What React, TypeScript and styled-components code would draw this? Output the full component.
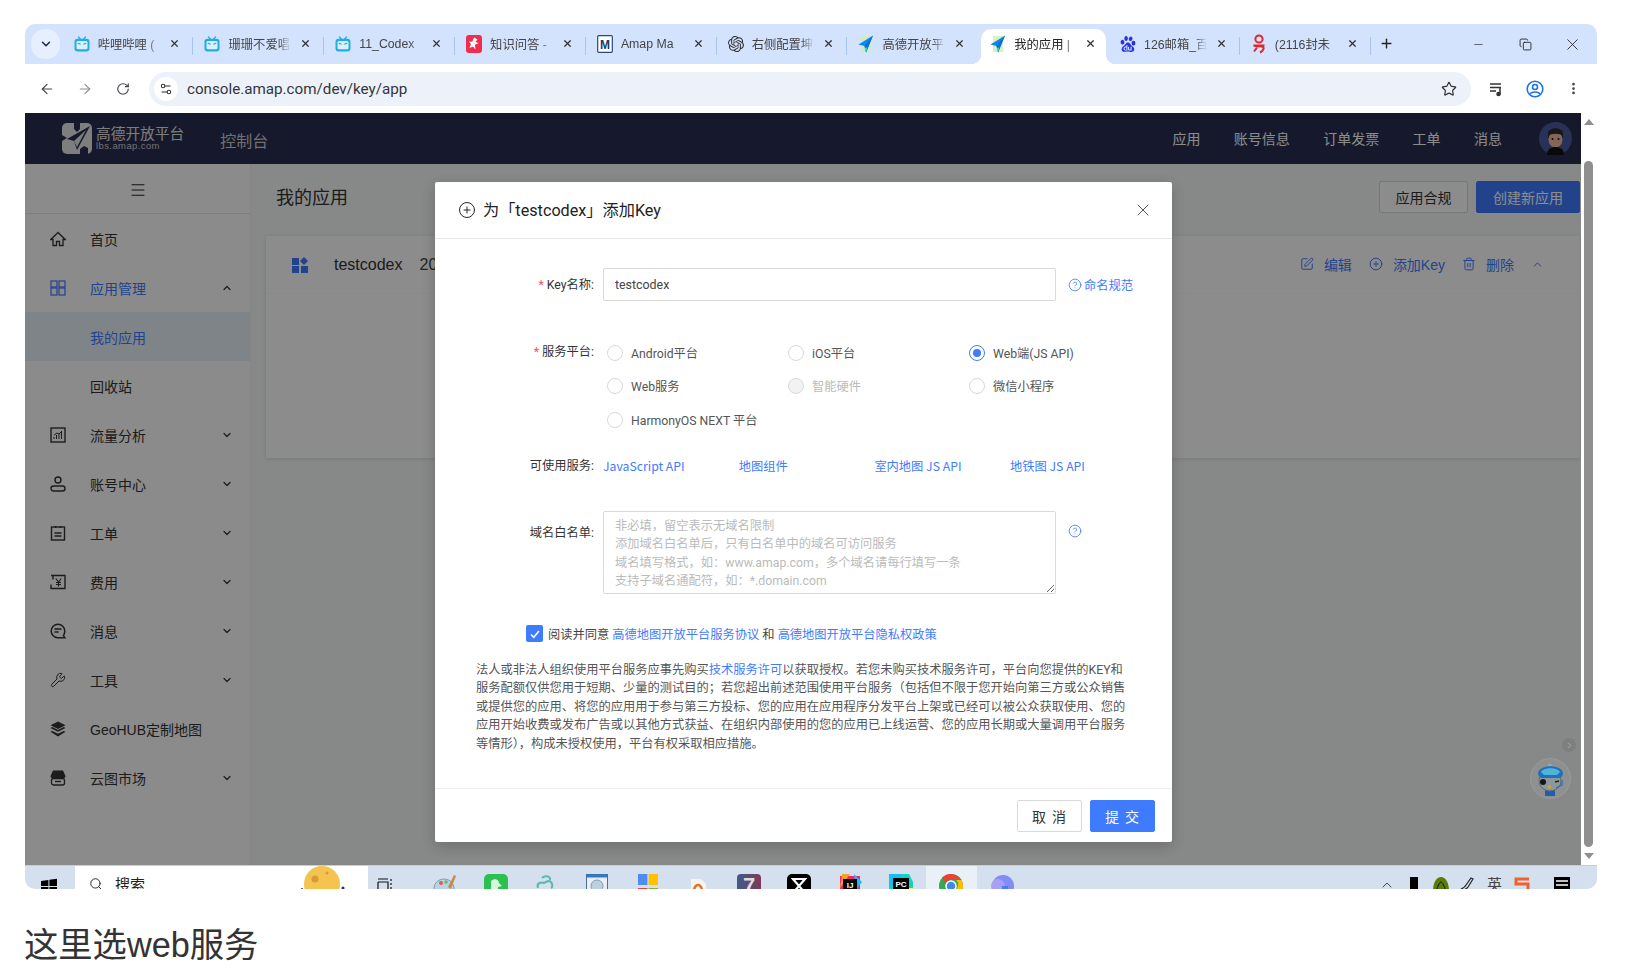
import React from 'react';
import styled, { createGlobalStyle } from 'styled-components';
import {
  ArrowLeft,
  ArrowRight,
  ChevronDown,
  ChevronUp,
  CircleHelp,
  CirclePlus,
  Copy,
  EllipsisVertical,
  Menu,
  Minus,
  Plus,
  RotateCw,
  Search,
  Settings2,
  SquarePen,
  Star,
  Trash2,
  Wrench,
  X,
} from 'lucide-react';
import { SiBaidu, SiOpenai } from 'react-icons/si';

const BLUE = '#3f7bff';
const CJK = `"Liberation Sans", "Noto Sans CJK SC", sans-serif`;
const FORM = `Roboto, "Noto Sans CJK SC", sans-serif`;

const GlobalStyle = createGlobalStyle`
  html, body {
    margin: 0;
    padding: 0;
    background: #fff;
    font-family: ${CJK};
    color: #333;
  }
  * { box-sizing: border-box; }
`;

const Screen = styled.div`
  width: 1634px;
  height: 980px;
  padding: 24px 0 0 25px;
  overflow: hidden;
`;

const BrowserWindow = styled.div`
  width: 1572px;
  border-radius: 10px;
  overflow: hidden;
`;

/* tab strip */
const TabStrip = styled.div`
  height: 40px;
  background: #d3e3fd;
  display: flex;
  align-items: flex-end;
`;

const TabMenuButton = styled.div`
  width: 29px;
  height: 30px;
  margin: 0 2.7px 5px 6px;
  border-radius: 14px;
  background: #e6effd;
  display: flex;
  align-items: center;
  justify-content: center;
  color: #1f2a44;
`;

const Tab = styled.div<{ $active?: boolean; $noSep?: boolean }>`
  position: relative;
  width: 130.8px;
  height: 35px;
  flex: none;
  display: flex;
  align-items: center;
  padding: 0 13px 6px 11px;
  margin: 0;
  font-size: 12.3px;
  color: ${(p) => (p.$active ? '#222' : '#444')};

  ${(p) =>
    p.$active
      ? `
    background: #fff;
    border-radius: 10px 10px 0 0;
    width: 124.8px;
    margin: 0 3px;
    padding-left: 9px;
    padding-right: 10px;
    &::before, &::after {
      content: '';
      position: absolute;
      bottom: 0;
      width: 10px;
      height: 10px;
    }
    &::before {
      left: -10px;
      background: radial-gradient(circle at 0 0, #d3e3fd 10px, #fff 10.5px);
    }
    &::after {
      right: -10px;
      background: radial-gradient(circle at 100% 0, #d3e3fd 10px, #fff 10.5px);
    }
  `
      : !p.$noSep
      ? `
    &::after {
      content: '';
      position: absolute;
      right: 0;
      top: 8px;
      width: 1px;
      height: 18px;
      background: #a8c4ee;
    }
  `
      : ''}
`;

const Favicon = styled.span`
  width: 16px;
  height: 16px;
  flex: none;
  display: flex;
  margin-right: 8px;
  align-items: center;
`;

const TabTitle = styled.span`
  flex: 1;
  overflow: hidden;
  white-space: nowrap;
  -webkit-mask-image: linear-gradient(to right, #000 80%, transparent);
  mask-image: linear-gradient(to right, #000 80%, transparent);
  margin-right: 9px;
`;

const TabClose = styled(X)`
  flex: none;
  color: #333;
`;

const NewTab = styled.div`
  width: 32px;
  height: 35px;
  padding-bottom: 6px;
  display: flex;
  align-items: center;
  justify-content: center;
  color: #222;
`;

const WindowControls = styled.div`
  margin-left: auto;
  display: flex;
  height: 40px;
  padding-right: 1px;
`;

const WindowControl = styled.div`
  width: 47px;
  display: flex;
  align-items: center;
  justify-content: center;
  color: #111;
`;

/* toolbar */
const Toolbar = styled.div`
  height: 49px;
  background: #fff;
  display: flex;
  align-items: center;
  padding: 0 5px 0 3px;
`;

const ToolButton = styled.div<{ $muted?: boolean }>`
  width: 38px;
  height: 34px;
  flex: none;
  display: flex;
  align-items: center;
  justify-content: center;
  color: ${(p) => (p.$muted ? '#8d9095' : '#45484d')};
`;

const AddressBar = styled.div`
  flex: 1;
  height: 34px;
  margin: 0 7px;
  border-radius: 17px;
  background: #edf2fa;
  display: flex;
  align-items: center;
  padding: 0 14px 0 5px;
`;

const SiteIcon = styled.div`
  width: 24px;
  height: 24px;
  border-radius: 50%;
  background: #fff;
  display: flex;
  align-items: center;
  justify-content: center;
  color: #333;
  margin-right: 9px;
`;

const Url = styled.span`
  flex: 1;
  font-family: Roboto, "Liberation Sans", sans-serif;
  font-size: 15.2px;
  color: #33363a;
`;

/* site */
const Viewport = styled.div`
  display: flex;
  height: 752px;
`;

const Page = styled.div`
  position: relative;
  flex: 1;
  display: flex;
  flex-direction: column;
  overflow: hidden;
  background: #f6f9f7;
`;

const TopBar = styled.header`
  height: 51px;
  flex: none;
  background: #282f50;
  color: #fff;
  display: flex;
  align-items: center;
  padding: 0 9px 0 37px;
`;

const Brand = styled.div`
  margin-left: 4px;
  display: flex;
  flex-direction: column;
  line-height: 1;
  margin-top: 1px;
`;

const BrandName = styled.span`
  font-size: 14.7px;
  color: #e4e4e4;
`;

const BrandSub = styled.span`
  font-size: 9.5px;
  color: #cfcfcf;
  margin-top: -1px;
  letter-spacing: 0.4px;
`;

const ConsoleLink = styled.span`
  margin-left: 36px;
  font-size: 16px;
  color: #ccc;
  margin-top: 2px;
`;

const TopNav = styled.nav`
  margin-left: auto;
  display: flex;
  gap: 33.4px;
  font-size: 14px;
  margin-top: -2px;
`;

const Avatar = styled.svg`
  margin-left: 37px;
  flex: none;
`;

const Body = styled.div`
  flex: 1;
  display: flex;
  min-height: 0;
`;

const Sidebar = styled.aside`
  width: 226px;
  flex: none;
  background: #fdfdfd;
  border-right: 1px solid #f0f0f0;
`;

const SideToggle = styled.div`
  height: 50px;
  display: flex;
  align-items: center;
  justify-content: center;
  border-bottom: 1px solid #e6e6e6;
  color: #222;
  padding-top: 2px;
`;

const SideItem = styled.div<{ $on?: boolean; $hl?: boolean }>`
  height: 49px;
  display: flex;
  align-items: center;
  padding: 0 17px 0 25px;
  font-size: 14px;
  color: ${(p) => (p.$on ? BLUE : '#333')};
  background: ${(p) => (p.$hl ? '#e8f0f9' : 'transparent')};
`;

const SideIcon = styled.span<{ $on?: boolean }>`
  width: 16px;
  height: 16px;
  flex: none;
  display: flex;
  margin-right: 24px;
  color: ${(p) => (p.$on ? BLUE : '#333')};
`;

const SideIndent = styled.span`
  width: 40px;
  flex: none;
`;

const SideLabel = styled.span`
  flex: 1;
`;

const Main = styled.main`
  flex: 1;
  min-width: 0;
`;

const TitleRow = styled.div`
  display: flex;
  align-items: center;
  padding: 17px 1px 0 25px;
`;

const PageTitle = styled.h1`
  margin: -2px 0 0;
  flex: 1;
  font-size: 18px;
  font-weight: 400;
  color: #333;
`;

const Button = styled.button<{ $primary?: boolean }>`
  height: 32px;
  border-radius: 2px;
  border: 1px solid ${(p) => (p.$primary ? BLUE : '#d9d9d9')};
  background: ${(p) => (p.$primary ? BLUE : '#fff')};
  color: ${(p) => (p.$primary ? '#fff' : '#333')};
  font-family: ${CJK};
  font-size: 14px;
  padding: 0;
`;

const ComplianceButton = styled(Button)`
  width: 89px;
  margin-right: 8px;
`;

const CreateButton = styled(Button)`
  width: 104px;
`;

const AppCard = styled.section`
  height: 222px;
  margin: 23px 1px 0 15px;
  background: #fff;
  box-shadow: 0 1px 4px rgba(0, 0, 0, 0.12);
`;

const AppCardHead = styled.div`
  height: 58px;
  display: flex;
  align-items: center;
  padding: 0 36px 0 26px;
  border-bottom: 1px solid #fafafa;
`;

const AppMark = styled.span`
  display: flex;
  color: ${BLUE};
`;

const AppName = styled.span`
  margin-left: 26px;
  font-size: 16px;
  color: #333;
`;

const AppDate = styled.span`
  margin-left: 17px;
  font-size: 16px;
  color: #444;
`;

const AppActions = styled.div`
  margin-left: auto;
  display: flex;
  align-items: center;
  gap: 17px;
  color: ${BLUE};
  font-size: 14px;
  margin-top: -1px;
`;

const AppAction = styled.span`
  display: flex;
  align-items: center;
  gap: 10px;
`;

/* modal */
const Overlay = styled.div`
  position: absolute;
  inset: 0;
  background: rgba(0, 0, 0, 0.45);
`;

const Modal = styled.div`
  position: absolute;
  left: 410px;
  top: 69px;
  width: 737px;
  height: 660px;
  background: #fff;
  border-radius: 2px;
  box-shadow: 0 4px 14px rgba(0, 0, 0, 0.2);
  display: flex;
  flex-direction: column;
  font-size: 12.25px;
  font-family: ${FORM};
`;

const ModalHeader = styled.div`
  height: 57px;
  flex: none;
  display: flex;
  align-items: center;
  padding: 0 19px 0 23px;
  border-bottom: 1px solid #e8e8e8;
  color: #222;
`;

const ModalTitle = styled.span`
  flex: 1;
  margin: -2px 0 0 7px;
  font-size: 16.2px;
  font-weight: 400;
`;

const ModalBody = styled.div`
  flex: 1;
  padding-top: 29px;
`;

const FormRow = styled.div<{ $top: number; $center?: boolean }>`
  display: grid;
  grid-template-columns: 159px 453px auto;
  column-gap: 9px;
  margin-top: ${(p) => p.$top}px;
  align-items: ${(p) => (p.$center ? 'center' : 'start')};
`;

const FieldLabel = styled.label<{ $pad?: number }>`
  text-align: right;
  color: #333;
  line-height: 18px;
  padding-top: ${(p) => p.$pad ?? 0}px;
`;

const Required = styled.span`
  color: #f5584f;
  margin-right: 3px;
`;

const TextInput = styled.input`
  width: 453px;
  height: 33px;
  border: 1px solid #d9d9d9;
  border-radius: 2px;
  padding: 0 11px;
  font-family: ${FORM};
  font-size: 12.4px;
  color: #444;
  outline: none;
`;

const HelpLink = styled.a<{ $pad?: number }>`
  display: flex;
  align-items: center;
  gap: 2px;
  margin-left: 3px;
  padding-top: ${(p) => p.$pad ?? 0}px;
  color: ${BLUE};
  white-space: nowrap;
`;

const RadioGrid = styled.div`
  grid-column: 2 / 4;
  display: grid;
  grid-template-columns: repeat(3, 181px);
  grid-auto-rows: 33.5px;
  padding-left: 4px;
  align-items: center;
`;

const RadioOption = styled.label<{ $disabled?: boolean }>`
  display: flex;
  align-items: center;
  gap: 8px;
  white-space: nowrap;
  color: ${(p) => (p.$disabled ? '#bbb' : '#555')};
`;

const Radio = styled.input.attrs({ type: 'radio' })`
  appearance: none;
  width: 16px;
  height: 16px;
  margin: 0;
  flex: none;
  border-radius: 50%;
  border: 1px solid #d9d9d9;
  background: #fff;
  display: grid;
  place-items: center;

  &:checked {
    border-color: ${BLUE};
  }
  &:checked::after {
    content: '';
    width: 8px;
    height: 8px;
    border-radius: 50%;
    background: ${BLUE};
  }
  &:disabled {
    background: #f2f2f2;
  }
`;

const ServiceLinks = styled.div`
  grid-column: 2 / 4;
  display: grid;
  grid-template-columns: repeat(4, 135.7px);
  color: ${BLUE};
  font-family: "Noto Sans CJK SC", sans-serif;
  line-height: 18px;
  white-space: nowrap;
`;

const DomainArea = styled.textarea`
  display: block;
  width: 453px;
  height: 83px;
  border: 1px solid #d9d9d9;
  border-radius: 2px;
  padding: 5px 11px 3px;
  font-family: ${FORM};
  font-size: 12.25px;
  line-height: 18.5px;
  outline: none;

  &::placeholder {
    color: #bbb;
  }
`;

const AgreeRow = styled.div`
  display: flex;
  align-items: center;
  height: 18px;
  margin: 31px 0 0 91px;
  color: #444;
  white-space: pre;
`;

const CheckBox = styled.span`
  width: 17px;
  height: 17px;
  flex: none;
  border-radius: 2px;
  background: ${BLUE};
  color: #fff;
  display: flex;
  align-items: center;
  justify-content: center;
  margin-right: 5px;
`;

const Anchor = styled.a`
  color: ${BLUE};
`;

const Legal = styled.p`
  margin: 18px 0 0 41px;
  width: 660px;
  line-height: 18.5px;
  color: #555;
`;

const ModalFooter = styled.div`
  height: 54px;
  flex: none;
  display: flex;
  justify-content: flex-end;
  align-items: center;
  gap: 8px;
  padding-right: 17px;
  border-top: 1px solid #eee;
`;

const FooterButton = styled(Button)`
  width: 65px;
  letter-spacing: 1px;
`;

/* floating helper */
const HelperDot = styled.div`
  position: absolute;
  z-index: 2;
  left: 1537px;
  top: 625px;
  width: 14px;
  height: 14px;
  border-radius: 50%;
  background: #7f7f7f;
  color: #999;
  display: flex;
  align-items: center;
  justify-content: center;
`;

const HelperArrow = styled(ChevronDown)`
  transform: rotate(-90deg);
`;

const Helper = styled.svg`
  position: absolute;
  z-index: 2;
  left: 1505px;
  top: 645px;
`;

/* page scrollbar */
const PageScroll = styled.div`
  width: 16px;
  flex: none;
  background: #fff;
  display: flex;
  flex-direction: column;
  align-items: flex-start;
  padding: 6px 0 6px 3px;
`;

const ScrollArrow = styled.div<{ $down?: boolean }>`
  width: 0;
  height: 0;
  flex: none;
  border-left: 5px solid transparent;
  border-right: 5px solid transparent;
  ${(p) => (p.$down ? 'border-top: 6px solid #8f8f8f;' : 'border-bottom: 6px solid #8f8f8f;')}
`;

const ScrollThumb = styled.div`
  width: 9px;
  flex: 1;
  margin: 36px 0 6px;
  border-radius: 5px;
  background: #8f8f8f;
`;

/* task bar */
const Taskbar = styled.div`
  height: 24px;
  background: #d5e0ee;
  border-top: 1px solid #c4cedb;
  display: flex;
  overflow: hidden;
`;

const StartButton = styled.div`
  width: 50px;
  flex: none;
  padding: 12px 0 0 16px;
`;

const SearchBox = styled.div`
  width: 293px;
  flex: none;
  background: #fff;
  display: flex;
  align-items: flex-start;
  padding: 11px 23px 0 14px;
  font-size: 15px;
  line-height: 15px;
  color: #222;
`;

const SearchText = styled.span`
  margin-left: 12px;
  flex: 1;
`;

const Moon = styled.svg`
  flex: none;
  margin-top: -11px;
`;

const TaskView = styled.div`
  flex: none;
  margin: 12px 27px 0 9px;
`;

const TaskSlot = styled.div<{ $active?: boolean }>`
  width: 50.6px;
  flex: none;
  padding-top: 8px;
  display: flex;
  justify-content: center;
  background: ${(p) => (p.$active ? '#eaf0f7' : 'transparent')};
`;

const Tray = styled.div`
  margin-left: auto;
  display: flex;
  padding: 11px 22px 0 0;
`;

const TraySlot = styled.div<{ $gap?: number }>`
  width: 27px;
  display: flex;
  justify-content: center;
  margin-left: ${(p) => p.$gap ?? 0}px;
`;

const TrayText = styled.span`
  font-size: 15px;
  line-height: 15px;
  color: #444;
`;

const Caption = styled.p`
  margin: 35px 0 0 -1px;
  font-size: 34.3px;
  line-height: 42px;
  color: #333;
`;

/* drawings */
const TvIcon = () => (
  <svg width="16" height="16" viewBox="0 0 16 16">
    <path d="M4.5 1l2 2.2M11.5 1l-2 2.2" stroke="#23ade5" strokeWidth="1.3" strokeLinecap="round" />
    <rect x="0.5" y="2.8" width="15" height="12.7" rx="3" fill="#23ade5" />
    <rect x="2.5" y="5" width="11" height="8.3" rx="1.5" fill="#d8f2fb" />
    <path d="M4.2 7.4l2 .6M11.8 7.4l-2 .6" stroke="#23ade5" strokeWidth="1.3" strokeLinecap="round" />
  </svg>
);

const ZhiIcon = () => (
  <svg width="16" height="18" viewBox="0 0 16 18">
    <rect width="16" height="18" rx="3" fill="#ef2d4f" />
    <path d="M8 2.5l3.5 2-2 2.3 3 1.5-3.6 1.4.6 4.8L7 11.5 3.5 13l1.4-4L3 6.5l3.2.3z" fill="#fff" />
  </svg>
);

const MapBoxIcon = () => (
  <svg width="16" height="18" viewBox="0 0 16 18">
    <rect x="0.7" y="0.7" width="14.6" height="16.6" rx="1" fill="#fff" stroke="#234a82" strokeWidth="1.2" />
    <text x="8" y="13.5" textAnchor="middle" fontSize="12" fontWeight="700" fontFamily="Liberation Sans" fill="#1c3a66">
      M
    </text>
  </svg>
);

const PlaneIcon = () => (
  <svg width="16" height="18" viewBox="0 0 16 18">
    <rect x="3" y="1" width="10" height="16" fill="#cdeeb4" opacity="0.8" />
    <path d="M15 0.5L0.5 9.5l6 1.4 1.6 6.6z" fill="#0f86ee" />
    <path d="M15 0.5L6.5 10.9l1.6 6.6z" fill="#0b6fd0" />
    <path d="M6.5 13l1.6 4.5 1.2-5z" fill="#42d6c7" />
  </svg>
);

const MailIcon = () => (
  <svg width="16" height="20" viewBox="0 0 16 20" fill="none" stroke="#e0262c" strokeWidth="2">
    <circle cx="8" cy="5" r="3.6" />
    <path d="M2.5 11.5h11M2.5 11.5c3 1 8 .5 9.5 1.5s0 4-3 5.500M6 13.500l-3 4" />
  </svg>
);

const Paw = () => <SiBaidu size={16} color="#2932e1" />;
const OpenAi = () => <SiOpenai size={16} color="#333" />;

const Logo = () => (
  <svg width="30" height="31" viewBox="0 0 30 31">
    <rect width="30" height="31" rx="5" fill="#e6e6e6" />
    <path d="M12 0h6v6l-3 3-3-3zM0 12l5 3-5 3zM18 31v-5l4-3 4 2v6z" fill="#282f50" />
    <path d="M28 3L5 16l7 2 3 9z" fill="#282f50" />
    <path d="M24 7L12 18l3 6z" fill="#e6e6e6" />
  </svg>
);

const HomeIcon = () => (
  <svg width="16" height="16" viewBox="0 0 16 16" fill="none" stroke="currentColor" strokeWidth="1.3">
    <path d="M8 1.500L.8 8.500H3v6h3.500v-4h3v4H13v-6h2.200z" />
  </svg>
);

const GridOutline = () => (
  <svg width="16" height="16" viewBox="0 0 16 16" fill="none" stroke="currentColor" strokeWidth="1.2">
    <rect x="1" y="1" width="6" height="6" />
    <rect x="9" y="1" width="6" height="6" />
    <rect x="1" y="8" width="6" height="7" />
    <rect x="9" y="8" width="6" height="7" />
  </svg>
);

const ChartBox = () => (
  <svg width="16" height="16" viewBox="0 0 16 16" fill="none" stroke="currentColor" strokeWidth="1.4">
    <rect x="1" y="1" width="14" height="14" />
    <path d="M4 12V10M6.5 12V8M9 12V7M11.5 12V5M4 8l3-2 2 1 3-3" strokeWidth="1" />
  </svg>
);

const PersonIcon = () => (
  <svg width="16" height="16" viewBox="0 0 16 16" fill="none" stroke="currentColor" strokeWidth="1.4">
    <circle cx="8" cy="4" r="3" />
    <rect x="1" y="10" width="14" height="5" rx="2.5" />
  </svg>
);

const TicketIcon = () => (
  <svg width="16" height="16" viewBox="0 0 16 16" fill="none" stroke="currentColor" strokeWidth="1.4">
    <rect x="1.5" y="2" width="13" height="13" />
    <path d="M5.5 1v2M10.5 1v2M4.5 8h7M4.5 11h7" />
  </svg>
);

const FeeIcon = () => (
  <svg width="16" height="16" viewBox="0 0 16 16" fill="none" stroke="currentColor" strokeWidth="1.4">
    <path d="M2 1.500h13v13H2M1 1.500h2v4M1 10.500v4h2" />
    <path d="M5.800 4.500L8.500 8l2.700-3.500M8.500 8v4.500M6 8.500h5M6 10.500h5" strokeWidth="1.100" />
  </svg>
);

const ChatIcon = () => (
  <svg width="16" height="16" viewBox="0 0 16 16" fill="none" stroke="currentColor" strokeWidth="1.500">
    <path d="M15 14.800H8a6.800 6.800 0 1 1 6.800-6.800c0 2-.6 3.500-1.400 4.600z" />
    <path d="M4.500 6h7M4.500 9h4" />
  </svg>
);

const LayersIcon = () => (
  <svg width="17" height="16" viewBox="0 0 17 16" fill="currentColor">
    <path d="M8.500 0l8 4-8 4-8-4z" />
    <path d="M.5 7l2-1 6 3 6-3 2 1-8 4z" />
    <path d="M.5 11l2-1 6 3 6-3 2 1-8 5z" />
  </svg>
);

const StoreIcon = () => (
  <svg width="16" height="16" viewBox="0 0 16 16">
    <path d="M3 0.500h10l2.500 5.500c0 1.500-1 2.500-2.500 2.500H3C1.500 8.500.5 7.500.5 6z" fill="currentColor" />
    <rect x="1.500" y="8.500" width="13" height="6.500" rx="2" fill="none" stroke="currentColor" strokeWidth="1.300" />
    <path d="M5 11.500h6" stroke="currentColor" strokeWidth="1.400" />
  </svg>
);

const AppTile = () => (
  <svg width="16" height="16" viewBox="0 0 16 16" fill="currentColor">
    <rect x="0" y="1" width="7" height="7" />
    <path d="M12 0l4 4-4 4-4-4z" />
    <rect x="0" y="9" width="7" height="7" />
    <rect x="9" y="9" width="7" height="7" />
  </svg>
);

const WinLogo = () => (
  <svg width="16" height="16" viewBox="0 0 16 16" fill="#000">
    <path d="M0 3l7.400-1v6H0zM8.400 1.800L16 .8V8H8.400zM0 9h7.400v6L0 14zM8.400 9H16v7l-7.600-1z" />
  </svg>
);

const Chrome = () => (
  <svg width="24" height="24" viewBox="0 0 24 24">
    <circle cx="12" cy="12" r="12" fill="#34a853" />
    <path d="M12 0a12 12 0 0 1 10.400 6H12a6 6 0 0 0-5.200 3L3 3.800A12 12 0 0 1 12 0z" fill="#ea4335" />
    <path d="M22.400 6A12 12 0 0 1 12 24l5.200-9A6 6 0 0 0 17.200 6z" fill="#fbbc05" />
    <circle cx="12" cy="12" r="5" fill="#4285f4" stroke="#fff" strokeWidth="1.500" />
  </svg>
);

const taskIcons: React.ReactNode[] = [
  <svg key="palette" width="24" height="24" viewBox="0 0 24 24">
    <ellipse cx="11" cy="14" rx="10" ry="9" fill="#b9d3e6" stroke="#7f9db8" />
    <circle cx="8" cy="9" r="2" fill="#e25a4e" />
    <circle cx="13" cy="8" r="1.800" fill="#6dbb62" />
    <path d="M15 13l6-12 2 1-5 13z" fill="#c78a4a" />
  </svg>,
  <svg key="green" width="24" height="24" viewBox="0 0 24 24">
    <rect width="24" height="24" rx="5" fill="#2cc14f" />
    <path d="M7 24V7c3-3 8-2 8 2l3 3-4 1v11z" fill="#d9f5dd" />
  </svg>,
  <svg key="wing" width="24" height="24" viewBox="0 0 24 24" fill="none">
    <path d="M8 4c3-3 9-2 8 2M4 14c-2-5 3-6 6-5l4-2c5 0 5 6 3 7" stroke="#58b9a6" strokeWidth="2" />
    <path d="M3 16c4 5 14 6 18-1v9H3z" fill="#f5f5f5" stroke="#ea9a6a" />
  </svg>,
  <svg key="note" width="22" height="24" viewBox="0 0 22 24">
    <rect x="0.500" y="0.500" width="21" height="23" fill="#e7eef6" stroke="#4d6f93" />
    <rect x="0.500" y="0.500" width="21" height="3" fill="#2c7cc9" />
    <circle cx="11" cy="12" r="6" fill="#bcd0de" stroke="#7f9db8" />
  </svg>,
  <svg key="store" width="20" height="24" viewBox="0 0 20 24">
    <rect width="9.400" height="11" fill="#4d8bf5" />
    <rect x="10.600" width="9.400" height="11" fill="#ffc200" />
    <rect y="14" width="9.400" height="10" fill="#ea4335" />
    <rect x="10.600" y="14" width="9.400" height="10" fill="#7cb342" />
  </svg>,
  <svg key="office" width="18" height="24" viewBox="0 0 18 24">
    <path d="M2 5h10l5 5v14H2z" fill="#f7f3ee" />
    <ellipse cx="9" cy="17" rx="4" ry="6" fill="none" stroke="#d9772b" strokeWidth="2.500" />
  </svg>,
  <svg key="seven" width="24" height="24" viewBox="0 0 24 24">
    <defs>
      <linearGradient id="sevenBg" x1="0" y1="0" x2="1" y2="0">
        <stop offset="0" stopColor="#3f5a8c" />
        <stop offset="1" stopColor="#7d3a5a" />
      </linearGradient>
    </defs>
    <rect width="24" height="24" rx="4" fill="url(#sevenBg)" />
    <text x="12" y="19" textAnchor="middle" fontSize="22" fontWeight="700" fontFamily="Liberation Sans" fill="#ddd">
      7
    </text>
  </svg>,
  <svg key="capcut" width="24" height="24" viewBox="0 0 24 24">
    <rect width="24" height="24" rx="5" fill="#000" />
    <path d="M6 5h12L6 19h12z" stroke="#fff" strokeWidth="2.200" fill="none" />
  </svg>,
  <svg key="ij" width="24" height="24" viewBox="0 0 24 24">
    <path d="M2 2h20v22H2z" fill="#f5256d" />
    <path d="M16 0l8 8-6 8z" fill="#21b6f5" />
    <path d="M4 0h8L2 14z" fill="#f9a11b" />
    <rect x="5" y="5" width="14" height="14" fill="#000" />
    <text x="12" y="14" textAnchor="middle" fontSize="8" fontWeight="700" fontFamily="Liberation Sans" fill="#fff">
      IJ
    </text>
  </svg>,
  <svg key="pc" width="24" height="24" viewBox="0 0 24 24">
    <path d="M0 0h20l4 8v16H0z" fill="#0fd1c6" />
    <path d="M0 0h12v12H0z" fill="#16bdf0" />
    <path d="M18 14h6v10h-8z" fill="#fcf84a" />
    <rect x="4" y="4" width="16" height="16" fill="#000" />
    <text x="12" y="13" textAnchor="middle" fontSize="8" fontWeight="700" fontFamily="Liberation Sans" fill="#fff">
      PC
    </text>
  </svg>,
  <Chrome key="chrome" />,
  <svg key="blob" width="24" height="24" viewBox="0 0 24 24">
    <circle cx="13" cy="12" r="11" fill="#7f8df5" />
    <circle cx="8" cy="12" r="7" fill="#a8a0f7" />
    <path d="M12 12h6v12h-6z" fill="#4d7af0" />
  </svg>,
];

const tabs = [
  { title: '哔哩哔哩 (', icon: <TvIcon /> },
  { title: '珊珊不爱唱', icon: <TvIcon /> },
  { title: '11_Codex', icon: <TvIcon /> },
  { title: '知识问答 -', icon: <ZhiIcon /> },
  { title: 'Amap Ma', icon: <MapBoxIcon /> },
  { title: '右侧配置坤', icon: <OpenAi /> },
  { title: '高德开放平', icon: <PlaneIcon />, noSep: true },
  { title: '我的应用 |', icon: <PlaneIcon />, active: true },
  { title: '126邮箱_百', icon: <Paw /> },
  { title: '(2116封未', icon: <MailIcon /> },
];

const sideItems = [
  { label: '首页', icon: <HomeIcon /> },
  { label: '应用管理', icon: <GridOutline />, on: true, open: true },
  { label: '我的应用', sub: true, on: true, hl: true },
  { label: '回收站', sub: true },
  { label: '流量分析', icon: <ChartBox />, more: true },
  { label: '账号中心', icon: <PersonIcon />, more: true },
  { label: '工单', icon: <TicketIcon />, more: true },
  { label: '费用', icon: <FeeIcon />, more: true },
  { label: '消息', icon: <ChatIcon />, more: true },
  { label: '工具', icon: <Wrench size={16} strokeWidth={1.5} />, more: true },
  { label: 'GeoHUB定制地图', icon: <LayersIcon /> },
  { label: '云图市场', icon: <StoreIcon />, more: true },
];

const placeholder = [
  '非必填，留空表示无域名限制',
  '添加域名白名单后，只有白名单中的域名可访问服务',
  '域名填写格式，如：www.amap.com，多个域名请每行填写一条',
  '支持子域名通配符，如：*.domain.com',
].join('\n');

const App: React.FC = () => (
  <>
    <GlobalStyle />
    <Screen>
      <BrowserWindow>
        <TabStrip>
          <TabMenuButton>
            <ChevronDown size={14} strokeWidth={2.6} />
          </TabMenuButton>
          {tabs.map((t) => (
            <Tab key={t.title} $active={t.active} $noSep={t.noSep}>
              <Favicon>{t.icon}</Favicon>
              <TabTitle>{t.title}</TabTitle>
              <TabClose size={11} strokeWidth={2.6} />
            </Tab>
          ))}
          <NewTab>
            <Plus size={15} strokeWidth={2.2} />
          </NewTab>
          <WindowControls>
            <WindowControl>
              <Minus size={13} strokeWidth={1.1} />
            </WindowControl>
            <WindowControl>
              <Copy size={13} strokeWidth={1.5} />
            </WindowControl>
            <WindowControl>
              <X size={19} strokeWidth={1} />
            </WindowControl>
          </WindowControls>
        </TabStrip>

        <Toolbar>
          <ToolButton>
            <ArrowLeft size={16} strokeWidth={1.8} />
          </ToolButton>
          <ToolButton $muted>
            <ArrowRight size={16} strokeWidth={1.8} />
          </ToolButton>
          <ToolButton>
            <RotateCw size={14} strokeWidth={2} />
          </ToolButton>
          <AddressBar>
            <SiteIcon>
              <Settings2 size={14} strokeWidth={1.8} />
            </SiteIcon>
            <Url>console.amap.com/dev/key/app</Url>
            <Star size={16} strokeWidth={1.8} color="#333" />
          </AddressBar>
          <ToolButton>
            <svg width="16" height="16" viewBox="0 0 16 16" fill="none" stroke="#333" strokeWidth="1.500">
              <path d="M1 3h11M1 6.500h11M1 10h6M11 6v7.500" />
              <circle cx="9.500" cy="13" r="1.500" fill="#333" />
            </svg>
          </ToolButton>
          <ToolButton>
            <svg width="18" height="18" viewBox="0 0 18 18" fill="none" stroke="#1a73e8" strokeWidth="1.600">
              <circle cx="9" cy="9" r="7.800" />
              <circle cx="9" cy="7" r="2.500" />
              <path d="M3.800 13.800c2.500-2.500 7.900-2.500 10.400 0" />
            </svg>
          </ToolButton>
          <ToolButton>
            <EllipsisVertical size={15} strokeWidth={2.4} />
          </ToolButton>
        </Toolbar>

        <Viewport>
          <Page>
            <TopBar>
              <Logo />
              <Brand>
                <BrandName>高德开放平台</BrandName>
                <BrandSub>lbs.amap.com</BrandSub>
              </Brand>
              <ConsoleLink>控制台</ConsoleLink>
              <TopNav>
                <span>应用</span>
                <span>账号信息</span>
                <span>订单发票</span>
                <span>工单</span>
                <span>消息</span>
              </TopNav>
              <Avatar width="33" height="33" viewBox="0 0 33 33">
                <circle cx="16.500" cy="16.500" r="16.500" fill="#4a5a9f" />
                <path d="M9 13c-1-9 16-9 15 0v3H9z" fill="#2a2a2a" />
                <ellipse cx="16.500" cy="17.500" rx="7" ry="8" fill="#f0b99d" />
                <path d="M9 14c3-3 12-3 15 0l-1-6H10z" fill="#2a2a2a" />
                <circle cx="13.500" cy="17" r="1" fill="#111" />
                <circle cx="19.500" cy="17" r="1" fill="#111" />
                <path d="M8 33c0-6 4-8 8.500-8s8.500 2 8.500 8z" fill="#111" />
              </Avatar>
            </TopBar>
            <Body>
              <Sidebar>
                <SideToggle>
                  <Menu size={18} strokeWidth={1.4} />
                </SideToggle>
                {sideItems.map((item) => (
                  <SideItem key={item.label} $on={item.on} $hl={item.hl}>
                    {item.sub ? <SideIndent /> : <SideIcon $on={item.on}>{item.icon}</SideIcon>}
                    <SideLabel>{item.label}</SideLabel>
                    {item.more && <ChevronDown size={12} strokeWidth={2.4} color="#333" />}
                    {item.open && <ChevronUp size={12} strokeWidth={2.4} color="#333" />}
                  </SideItem>
                ))}
              </Sidebar>
              <Main>
                <TitleRow>
                  <PageTitle>我的应用</PageTitle>
                  <ComplianceButton>应用合规</ComplianceButton>
                  <CreateButton $primary>创建新应用</CreateButton>
                </TitleRow>
                <AppCard>
                  <AppCardHead>
                    <AppMark>
                      <AppTile />
                    </AppMark>
                    <AppName>testcodex</AppName>
                    <AppDate>20</AppDate>
                    <AppActions>
                      <AppAction>
                        <SquarePen size={14} strokeWidth={1.7} />
                        编辑
                      </AppAction>
                      <AppAction>
                        <CirclePlus size={14} strokeWidth={1.7} />
                        添加Key
                      </AppAction>
                      <AppAction>
                        <Trash2 size={14} strokeWidth={1.7} />
                        删除
                      </AppAction>
                      <ChevronUp size={13} strokeWidth={1.8} />
                    </AppActions>
                  </AppCardHead>
                </AppCard>
              </Main>
            </Body>

            <Overlay />
            <HelperDot>
              <HelperArrow size={9} strokeWidth={3} />
            </HelperDot>
            <Helper width="41" height="41" viewBox="0 0 41 41">
              <circle cx="20.500" cy="20.500" r="20" fill="#8f9090" stroke="#9a9b9b" />
              <path d="M20 5l3 3h-6z" fill="#a0a5a8" />
              <path d="M15 31h10v7H15z" fill="#1d5fae" />
              <ellipse cx="20" cy="23" rx="11" ry="10" fill="#8e979c" stroke="#5f6a70" />
              <path d="M8 15c1-9 24-9 25 0 0 3-2 5-5 5H13c-3 0-5-2-5-5z" fill="#2072b8" />
              <path d="M11 14c3-5 16-5 19 0l-3 3H14z" fill="#4fb4dc" />
              <circle cx="13" cy="24" r="3" fill="#161616" />
              <path d="M25 24l4-1" stroke="#222" strokeWidth="1.500" />
              <circle cx="19.500" cy="29" r="1.800" fill="#d2a13c" />
              <path d="M32 22v5l-6 3" fill="none" stroke="#2072b8" strokeWidth="1.200" />
            </Helper>

            <Modal>
              <ModalHeader>
                <CirclePlus size={18} strokeWidth={1.3} />
                <ModalTitle>为「testcodex」添加Key</ModalTitle>
                <X size={20} strokeWidth={1.2} color="#555" />
              </ModalHeader>
              <ModalBody>
                <FormRow $top={0} $center>
                  <FieldLabel>
                    <Required>*</Required>Key名称:
                  </FieldLabel>
                  <TextInput defaultValue="testcodex" />
                  <HelpLink>
                    <CircleHelp size={14} strokeWidth={1.4} />
                    命名规范
                  </HelpLink>
                </FormRow>

                <FormRow $top={35}>
                  <FieldLabel $pad={7}>
                    <Required>*</Required>服务平台:
                  </FieldLabel>
                  <RadioGrid>
                    <RadioOption>
                      <Radio name="platform" />
                      Android平台
                    </RadioOption>
                    <RadioOption>
                      <Radio name="platform" />
                      iOS平台
                    </RadioOption>
                    <RadioOption>
                      <Radio name="platform" defaultChecked />
                      Web端(JS API)
                    </RadioOption>
                    <RadioOption>
                      <Radio name="platform" />
                      Web服务
                    </RadioOption>
                    <RadioOption $disabled>
                      <Radio name="platform" disabled />
                      智能硬件
                    </RadioOption>
                    <RadioOption>
                      <Radio name="platform" />
                      微信小程序
                    </RadioOption>
                    <RadioOption>
                      <Radio name="platform" />
                      HarmonyOS NEXT 平台
                    </RadioOption>
                  </RadioGrid>
                </FormRow>

                <FormRow $top={20}>
                  <FieldLabel>可使用服务:</FieldLabel>
                  <ServiceLinks>
                    <span>JavaScript API</span>
                    <span>地图组件</span>
                    <span>室内地图 JS API</span>
                    <span>地铁图 JS API</span>
                  </ServiceLinks>
                </FormRow>

                <FormRow $top={36}>
                  <FieldLabel $pad={13}>域名白名单:</FieldLabel>
                  <DomainArea placeholder={placeholder} />
                  <HelpLink $pad={13}>
                    <CircleHelp size={14} strokeWidth={1.4} />
                  </HelpLink>
                </FormRow>

                <AgreeRow>
                  <CheckBox>
                    <svg width="12" height="12" viewBox="0 0 12 12" fill="none" stroke="#fff" strokeWidth="1.600">
                      <path d="M2 6.500l2.800 2.800L10 3" />
                    </svg>
                  </CheckBox>
                  阅读并同意 <Anchor>高德地图开放平台服务协议</Anchor> 和 <Anchor>高德地图开放平台隐私权政策</Anchor>
                </AgreeRow>

                <Legal>
                  法人或非法人组织使用平台服务应事先购买<Anchor>技术服务许可</Anchor>以获取授权。若您未购买技术服务许可，平台向您提供的KEY和
                  <br />
                  服务配额仅供您用于短期、少量的测试目的；若您超出前述范围使用平台服务（包括但不限于您开始向第三方或公众销售
                  <br />
                  或提供您的应用、将您的应用用于参与第三方投标、您的应用在应用程序分发平台上架或已经可以被公众获取使用、您的
                  <br />
                  应用开始收费或发布广告或以其他方式获益、在组织内部使用的您的应用已上线运营、您的应用长期或大量调用平台服务
                  <br />
                  等情形），构成未授权使用，平台有权采取相应措施。
                </Legal>
              </ModalBody>
              <ModalFooter>
                <FooterButton>取 消</FooterButton>
                <FooterButton $primary>提 交</FooterButton>
              </ModalFooter>
            </Modal>
          </Page>
          <PageScroll>
            <ScrollArrow />
            <ScrollThumb />
            <ScrollArrow $down />
          </PageScroll>
        </Viewport>

        <Taskbar>
          <StartButton>
            <WinLogo />
          </StartButton>
          <SearchBox>
            <Search size={14} strokeWidth={1.6} />
            <SearchText>搜索</SearchText>
            <Moon width="46" height="36" viewBox="0 0 46 36">
              <circle cx="23" cy="18" r="18" fill="#f5c34f" />
              <circle cx="16" cy="13" r="3.500" fill="#d79a35" />
              <circle cx="28" cy="7" r="1.500" fill="#d79a35" />
              <circle cx="3" cy="23" r="1" fill="#1c2f6b" />
              <circle cx="44" cy="22" r="1.500" fill="#1c2f6b" />
            </Moon>
          </SearchBox>
          <TaskView>
            <svg width="16" height="14" viewBox="0 0 16 14" fill="none" stroke="#111" strokeWidth="1.200">
              <path d="M1 1h10M1 4h10v10M1 4v10M14 1v2M14 5v2M14 9v2" />
            </svg>
          </TaskView>
          {taskIcons.map((icon, i) => (
            <TaskSlot key={i} $active={i === 10}>
              {icon}
            </TaskSlot>
          ))}
          <Tray>
            <TraySlot>
              <ChevronUp size={16} strokeWidth={1.2} color="#222" />
            </TraySlot>
            <TraySlot>
              <svg width="10" height="14" viewBox="0 0 10 14">
                <rect x="1" width="8" height="14" fill="#000" />
              </svg>
            </TraySlot>
            <TraySlot>
              <svg width="16" height="14" viewBox="0 0 16 14">
                <path d="M8 0c5 0 8 6 8 14H0C0 6 3 0 8 0z" fill="#5a7d0a" />
                <path d="M4 12c1-4 3-7 4-7s3 3 4 7" fill="none" stroke="#111" />
              </svg>
            </TraySlot>
            <TraySlot>
              <svg width="16" height="14" viewBox="0 0 16 14" fill="none" stroke="#222" strokeWidth="1.200">
                <path d="M1 12c3-1 4-2 5-4l5-7 2 1-5 8c-1 2-4 3-7 4" />
              </svg>
            </TraySlot>
            <TraySlot>
              <TrayText>英</TrayText>
            </TraySlot>
            <TraySlot>
              <svg width="16" height="14" viewBox="0 0 16 14" fill="none" stroke="#f0612e" strokeWidth="3">
                <path d="M15 2H2v5h12v7" />
              </svg>
            </TraySlot>
            <TraySlot $gap={13}>
              <svg width="16" height="14" viewBox="0 0 16 14">
                <rect width="16" height="14" fill="#000" />
                <path d="M2 4h12M2 8h12" stroke="#fff" strokeWidth="1.300" />
              </svg>
            </TraySlot>
          </Tray>
        </Taskbar>
      </BrowserWindow>
      <Caption>这里选web服务</Caption>
    </Screen>
  </>
);

export default App;
